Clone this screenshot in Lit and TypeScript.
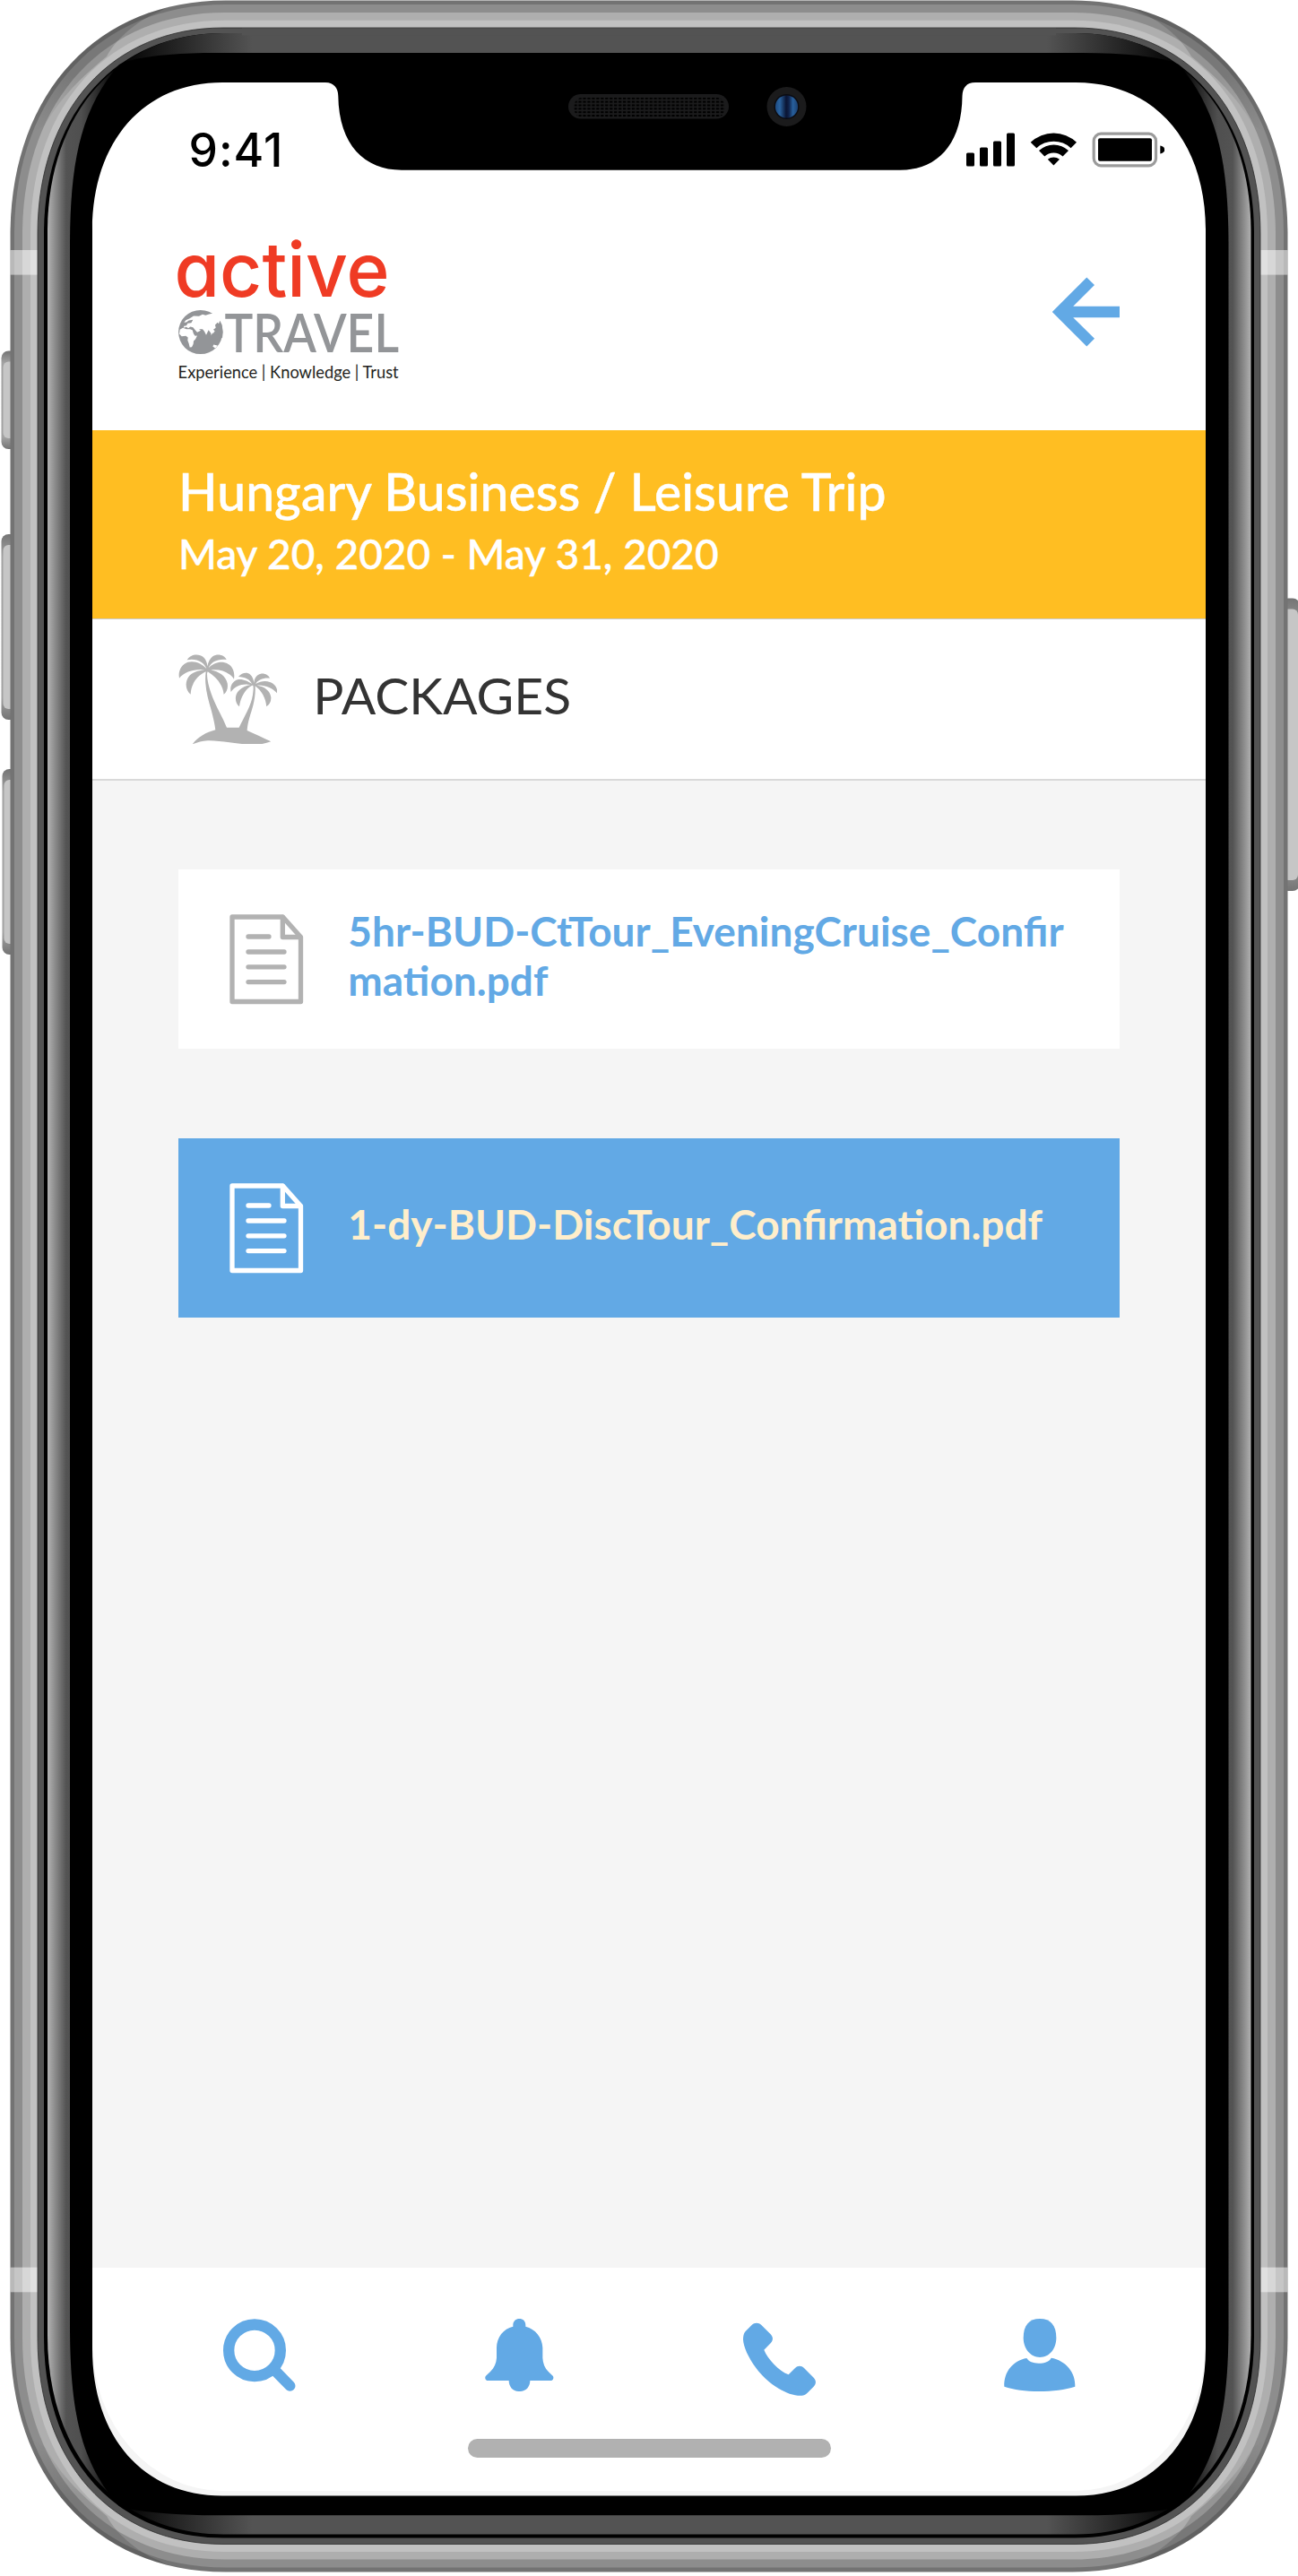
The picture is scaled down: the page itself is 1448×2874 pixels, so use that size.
import { LitElement, html, css, svg } from "lit";
import { customElement, property } from "lit/decorators.js";
import { classMap } from "lit/directives/class-map.js";

const CORNER = 0.6;

/** Closed rounded rectangle whose corners are slightly squarer than an ellipse. */
function body(l: number, t: number, r: number, b: number, rx: number, ry: number, k = CORNER): string {
  const cx = rx * (1 - k);
  const cy = ry * (1 - k);
  return [
    `M${l},${t + ry}`,
    `C${l},${t + cy} ${l + cx},${t} ${l + rx},${t}`,
    `L${r - rx},${t}`,
    `C${r - cx},${t} ${r},${t + cy} ${r},${t + ry}`,
    `L${r},${b - ry}`,
    `C${r},${b - cy} ${r - cx},${b} ${r - rx},${b}`,
    `L${l + rx},${b}`,
    `C${l + cx},${b} ${l},${b - cy} ${l},${b - ry}`,
    "Z",
  ].join(" ");
}

const SCREEN = [
  "M103,257 C103,158 160,92 248,92",
  "L363,92 C373,92 377.3,99 377.3,107 C378,162 407,189.7 448,189.7",
  "L1004,189.7 C1045,189.7 1073,162 1073.5,107 C1074,98 1078,92 1088,92",
  "L1200,92 C1288,92 1345,158 1345,257",
  "L1345,2620 C1345,2719 1288,2784.5 1200,2784.5",
  "L248,2784.5 C160,2784.5 103,2719 103,2620 Z",
].join(" ");

@customElement("phone-shell")
export class PhoneShell extends LitElement {
  static styles = css`
    :host { display: block; }
    .shell { display: block; width: 1448px; height: 2874px; }
  `;

  private sideKey(x: number, y: number, w: number, h: number) {
    return svg`
      <rect x=${x} y=${y} width=${w} height=${h} rx="8" fill="url(#key)"></rect>
      <rect x=${x + 2} y=${y + 12} width=${w - 4} height=${h - 24} rx="6" fill="#c6c6c6"></rect>`;
  }

  render() {
    const outer = body(11.5, 0.5, 1436.5, 2869.5, 240, 262);
    const rim = body(42, 31, 1406, 2838.5, 207, 230);
    const shade = "M200,0 L178,13 C150,24 128,46 119,63 C84,92 66,112 50,140 L33,150 L0,190 L0,0 Z";
    return html`
      <svg class="shell" viewBox="0 0 1448 2874" aria-hidden="true">
        <defs>
          <linearGradient id="glint" gradientUnits="userSpaceOnUse" x1="53" y1="0" x2="1396" y2="0">
            <stop offset="0" stop-color="#b2b2b2"></stop>
            <stop offset="0.0155" stop-color="#535353"></stop>
            <stop offset="0.028" stop-color="#4f4f4f"></stop>
            <stop offset="0.058" stop-color="#000"></stop>
            <stop offset="0.072" stop-color="#0a0a0a"></stop>
            <stop offset="0.17" stop-color="#535353"></stop>
            <stop offset="0.83" stop-color="#535353"></stop>
            <stop offset="0.928" stop-color="#0a0a0a"></stop>
            <stop offset="0.942" stop-color="#000"></stop>
            <stop offset="0.972" stop-color="#4f4f4f"></stop>
            <stop offset="0.9845" stop-color="#535353"></stop>
            <stop offset="1" stop-color="#b2b2b2"></stop>
          </linearGradient>
          <linearGradient id="key" x1="0" y1="0" x2="0" y2="1">
            <stop offset="0" stop-color="#747474"></stop>
            <stop offset="0.12" stop-color="#a2a2a2"></stop>
            <stop offset="0.88" stop-color="#a2a2a2"></stop>
            <stop offset="1" stop-color="#747474"></stop>
          </linearGradient>
          <linearGradient id="shade" gradientUnits="userSpaceOnUse" x1="40" y1="150" x2="70" y2="80">
            <stop offset="0" stop-opacity="0"></stop>
            <stop offset="1" stop-opacity="0.15"></stop>
          </linearGradient>
          <linearGradient id="lens">
            <stop offset="0" stop-color="#1d4a80"></stop>
            <stop offset="0.2" stop-color="#2a639f"></stop>
            <stop offset="0.48" stop-color="#0a1433"></stop>
            <stop offset="0.6" stop-color="#0f2149"></stop>
            <stop offset="0.78" stop-color="#28609c"></stop>
            <stop offset="1" stop-color="#1b4071"></stop>
          </linearGradient>
          <pattern id="mesh" patternUnits="userSpaceOnUse" x="640.5" y="108.8" width="4.95" height="3.85">
            <rect width="3.3" height="2" fill="#000"></rect>
          </pattern>
          <clipPath id="outer"><path d=${outer}></path></clipPath>
          <mask id="hole">
            <rect width="1448" height="2874" fill="#fff"></rect>
            <path d=${SCREEN} fill="#000"></path>
          </mask>
        </defs>

        <path d="M0,0H1448V2874H0Z ${outer}" fill="#fff" fill-rule="evenodd"></path>
        ${this.sideKey(1.5, 391.5, 20, 109.5)}
        ${this.sideKey(1.5, 596, 20, 207)}
        ${this.sideKey(2.5, 858, 20, 207)}
        ${this.sideKey(1429, 667.5, 21, 326.5)}

        <g mask="url(#hole)">
          <path d=${outer} fill="#737373"></path>
          <path d=${body(16, 5, 1432, 2864.5, 235, 257)} fill="#8d8d8d"></path>
          <path d=${body(25, 14, 1423, 2855.5, 226, 248)} fill="#aeaeae"></path>
          <path d=${body(34, 22.7, 1414, 2847, 216, 239)} fill="#c1c1c1"></path>
          <g clip-path="url(#outer)">
            ${["", "translate(1448 0) scale(-1 1)", "translate(0 2870) scale(1 -1)", "translate(1448 2870) scale(-1 -1)"].map(
              (t) => svg`<path transform=${t} d=${shade} fill="url(#shade)"></path>`
            )}
            <g fill="#fff" fill-opacity="0.5">
              <rect x="11" y="279" width="31.5" height="27.6"></rect>
              <rect x="1405.5" y="279" width="31.5" height="27.6"></rect>
              <rect x="11" y="2529.7" width="31.5" height="27.6"></rect>
              <rect x="1405.5" y="2529.7" width="31.5" height="27.6"></rect>
            </g>
          </g>
          <path d=${rim} fill="#535353" stroke="#2c2c2c" stroke-width="0.8"></path>
          <path d=${body(49, 37, 1399, 2831.5, 200, 224)} fill="#000"></path>
          <path d=${body(53, 37, 1395.5, 2827.5, 196, 222)} fill="url(#glint)"></path>
          <rect x="270" y="31.5" width="908" height="8" fill="#535353"></rect>
          <path
            d="M78,275 C78,180 90,122 133,72 L143,68 C170,61 205,59 240,59 L1208,59 C1243,59 1278,61 1305,68 L1315,72 C1358,122 1370.5,180 1370.5,275
               L1370.5,2594 C1370.5,2690 1358,2748 1315,2796 L1305,2799 C1278,2804 1243,2806.3 1208,2806.3 L240,2806.3 C205,2806.3 170,2804 143,2799 L133,2796 C90,2748 78,2690 78,2594 Z"
            fill="#000"
          ></path>
          <rect x="634" y="105" width="179" height="27.6" rx="13.8" fill="#1b1b1c"></rect>
          <rect x="640.5" y="108.8" width="168" height="22" rx="9" fill="url(#mesh)"></rect>
          <circle cx="877.5" cy="119" r="22" fill="#1b1b1c"></circle>
          <circle cx="877.5" cy="119" r="14" fill="#0b0c12"></circle>
          <circle cx="877.5" cy="119" r="12.6" fill="url(#lens)"></circle>
        </g>
      </svg>
    `;
  }
}

@customElement("status-bar")
export class StatusBar extends LitElement {
  static styles = css`
    :host { display: flex; justify-content: space-between; align-items: center; height: 128px; padding: 21px 46px 0 107.5px; box-sizing: border-box; }
    .time { font: 500 51.5px/60px Inter, sans-serif; letter-spacing: 1px; color: #000; }
    .signals { display: block; width: 222px; height: 44px; }
  `;

  render() {
    return html`
      <span class="time">9:41</span>
      <svg class="signals" viewBox="1077 144.5 222 44" role="img" aria-label="Signal, Wi-Fi, battery">
        <rect x="1078" y="170" width="9" height="15" rx="1.5"></rect>
        <rect x="1093" y="164" width="9" height="21" rx="1.5"></rect>
        <rect x="1108" y="157" width="9" height="28" rx="1.5"></rect>
        <rect x="1123" y="148" width="9" height="37" rx="1.5"></rect>
        <path d="M1149.7,158.3 A37,37 0 0 1 1201,158.3 L1194.6,164.7 A28,28 0 0 0 1156.3,164.7 Z"></path>
        <path d="M1159,167.5 A24,24 0 0 1 1192,167.5 L1185.5,174 A14.6,14.6 0 0 0 1165.3,174 Z"></path>
        <path d="M1168.8,177.3 A10.5,10.5 0 0 1 1182,177.3 L1175.4,184 Z"></path>
        <rect x="1220.2" y="148.7" width="69.3" height="35.6" rx="8" fill="none" stroke="#9b9b9b" stroke-width="3.2"></rect>
        <rect x="1225" y="153.7" width="60" height="25.6" rx="2"></rect>
        <path d="M1294.3,162 Q1299.2,163 1299.2,166.4 Q1299.2,170 1294.3,171 Z"></path>
      </svg>
    `;
  }
}

@customElement("brand-header")
export class BrandHeader extends LitElement {
  static styles = css`
    :host { display: flex; justify-content: space-between; align-items: center; height: 260px; padding: 0 96px 5px 95px; box-sizing: border-box; }
    .logo { display: block; width: 254px; height: 170px; overflow: visible; }
    .active { font: 500 84px Inter, sans-serif; font-feature-settings: "cv11"; fill: #ef3b24; }
    .travel { font: 600 60px Lato, sans-serif; fill: #939598; }
    .tagline { font: 400 18.5px Lato, sans-serif; fill: #231f20; }
    .back { display: block; width: 75px; height: 78px; fill: #62a9e5; }
  `;

  render() {
    return html`
      <svg class="logo" viewBox="198 262.5 254 170" role="img" aria-label="active TRAVEL">
        <text class="active" x="194.5" y="330" textLength="240" lengthAdjust="spacingAndGlyphs">active</text>
        <circle cx="223.7" cy="370" r="24.6" fill="#939598"></circle>
        <path
          transform="translate(180 250) scale(0.33333)"
          fill="#fff"
          d="M174,297 L160,300 L148,304 L138,301 L126,307 L108,306 L95,314 L82,320 L76,328 L84,327 L92,321 L106,319 L100,329 L88,331 L84,338 L76,340 L74,346 L84,343
             L90,347 L97,342 L106,344 L112,352 L120,361 L132,355 L126,350 L138,350 L144,358 L150,370 L158,353 L166,364 L168,376 L173,368 L176,360 L184,352 L188,340 L196,336
             L206,330 L200,312 L186,300 Z
             M62,352 L72,346 L84,350 L96,350 L104,353 L108,366 L113,373 L120,372 L114,384 L108,390 L107,400 L102,410 L95,411 L92,398 L88,388 L89,378 L82,373 L68,374 L60,366 Z
             M175,402 L188,405 L184,411 L180,414 L172,408 Z"
        ></path>
        <g transform="translate(180 250) scale(0.33333)" fill="#939598">
          <path d="M180,336 L188,328 L192,332 L196,322 L203,336 L206,360 L204,380 L196,376 L198,364 L192,366 L188,354 L180,358 L174,352 L182,346 Z"></path>
          <path d="M162,366 L166,372 L172,362 L178,370 L188,368 L196,378 L188,384 L176,380 L164,386 L158,372 Z"></path>
        </g>
        <text class="travel" x="250.5" y="392" textLength="194.5" lengthAdjust="spacingAndGlyphs">TRAVEL</text>
        <text class="tagline" x="198.6" y="421" textLength="246" lengthAdjust="spacingAndGlyphs">Experience | Knowledge | Trust</text>
      </svg>
      <svg class="back" viewBox="1174 308.5 75 78" role="img" aria-label="Back">
        <path d="M1173.7,347.5 L1212.3,309 L1221,317.6 L1197.2,341.2 L1249,341.2 L1249,353.8 L1197.2,353.8 L1221,377.3 L1212.3,386 Z"></path>
      </svg>
    `;
  }
}

@customElement("document-card")
export class DocumentCard extends LitElement {
  @property() name = "";
  @property({ type: Boolean }) active = false;

  static styles = css`
    :host { display: block; }
    .card { display: flex; align-items: center; height: 200px; box-sizing: border-box; padding: 0 46px 0 57px; gap: 49.8px; background: #fff; color: #62a9e5; }
    .icon { flex: none; width: 83px; height: 101px; fill: none; stroke: #b2b2b2; stroke-width: 5.3; stroke-linecap: round; stroke-linejoin: round; }
    .name { flex: 1; padding-bottom: 9px; font: 700 46px/55px Lato, sans-serif; word-break: break-all; }
    .card.active { background: #62a9e5; color: #ffeecb; }
    .card.active .icon { stroke: #fff; }
  `;

  render() {
    return html`
      <div class=${classMap({ card: true, active: this.active })}>
        <svg class="icon" viewBox="0 0 83 101" aria-hidden="true">
          <path d="M3,3 H59.5 L79.5,25.5 V97.5 H3 Z"></path>
          <path d="M59.3,3.5 V25.5 H79"></path>
          <path d="M21,25 H44 M21,42 H61 M21,58.8 H61 M21,75.6 H61"></path>
        </svg>
        <span class="name">${this.name}</span>
      </div>
    `;
  }
}

@customElement("bottom-nav")
export class BottomNav extends LitElement {
  static styles = css`
    :host { display: flex; flex-direction: column; align-items: center; height: 248.5px; background: #fff; border-radius: 0 0 145px 145px / 0 0 165px 165px; }
    .tabs { display: grid; grid-template-columns: repeat(4, 290.3px); justify-items: center; width: 1161px; height: 190.5px; margin-left: 1px; }
    .tab { display: block; height: 82px; margin-top: 57px; fill: #62a9e5; overflow: visible; }
    .indicator { width: 405px; height: 21.5px; border-radius: 11px; background: #b1b1b1; }
  `;

  render() {
    return html`
      <nav class="tabs">
        <svg class="tab" width="81" viewBox="146 141 243 246" role="img" aria-label="Search">
          <circle cx="251" cy="247" r="86.5" fill="none" stroke="#62a9e5" stroke-width="37"></circle>
          <path d="M323,318 L369.5,365.5" stroke="#62a9e5" stroke-width="36" stroke-linecap="round"></path>
        </svg>
        <svg class="tab" width="77" viewBox="1022 141 231 246" role="img" aria-label="Notifications">
          <path
            d="M1116,167 V162 C1116,149 1126,141 1137,141 C1149,141 1158,149 1158,162 V167 C1190,175 1214,203 1215,238 V272 C1216,290 1222,306 1235,319 L1249,332
               C1254,338 1250,348 1242,348 H1173 C1173,369 1159,384 1140,384 H1134 C1116,384 1102,369 1102,348 H1032 C1024,348 1020,338 1025,332 L1040,318
               C1053,305 1060,290 1061,272 V238 C1061,203 1084,174 1116,167 Z"
          ></path>
        </svg>
        <svg class="tab" width="81" viewBox="327 141 243 246" role="img" aria-label="Call">
          <path
            d="M356,162 C365,153 379,153 388,162 L419,193 C428,202 428,214 419,223 L397,245 C409,275 446,315 479,328 L501,306 C510,297 522,297 531,306
               L563,338 C572,347 572,359 563,368 L542,389 C534,397 525,399 510,398 C464,394 406,354 371,307 C344,271 328,234 327,211 C327,199 329,189 335,183 Z"
          ></path>
        </svg>
        <svg class="tab" width="80" viewBox="1199 141 240 246" role="img" aria-label="Profile">
          <path d="M1319,141 C1355,141 1374,163 1374,205 C1374,242 1351,270 1319,270 C1288,270 1264,242 1264,205 C1264,163 1283,141 1319,141 Z"></path>
          <path
            d="M1275,273 C1282,284 1296,290 1315,290 C1335,290 1351,284 1357,272 C1405,280 1439,320 1437,368 C1404,378 1362,384 1316,384
               C1271,384 1232,378 1200,368 C1198,319 1229,281 1275,273 Z"
          ></path>
        </svg>
      </nav>
      <div class="indicator"></div>
    `;
  }
}

@customElement("app-root")
export class AppRoot extends LitElement {
  private readonly documents = [
    { name: "5hr-BUD-CtTour_EveningCruise_Confirmation.pdf", active: false },
    { name: "1-dy-BUD-DiscTour_Confirmation.pdf", active: true },
  ];

  static styles = css`
    :host { display: block; position: relative; width: 1448px; height: 2874px; overflow: hidden; background: #fff; font-family: Lato, sans-serif; }
    .screen { display: flex; flex-direction: column; width: 1242px; height: 2693px; margin: 92px 0 0 103px; background: #f5f5f5; }
    .top { background: #fff; }
    .trip { box-sizing: border-box; height: 211px; padding: 36px 90px 0 96px; background: #ffbe22; border-bottom: 1.5px solid #ccc; color: #fff; white-space: nowrap; -webkit-text-stroke: 0.45px #fff; }
    .trip-name { margin: 0; font: 500 57px/65px Lato, sans-serif; letter-spacing: 0.08px; }
    .trip-dates { margin: 0; font: 500 46px/73px Lato, sans-serif; }
    .section { display: flex; align-items: center; box-sizing: border-box; height: 180px; padding-left: 95.5px; gap: 40.5px; background: #fff; border-bottom: 2px solid #d9d9d9; }
    .palms { display: block; width: 110.3px; height: 100.7px; fill: #b2b2b2; }
    .section-name { margin: 0; padding-bottom: 11px; font: 400 57px/66px Lato, sans-serif; color: #333; }
    .list { flex: 1; display: flex; flex-direction: column; gap: 100px; padding: 99px 96px 0 95.5px; }
    .nav { flex: none; margin-bottom: 6.5px; }
    .shell { position: absolute; inset: 0; pointer-events: none; }
  `;

  render() {
    return html`
      <main class="screen">
        <div class="top">
          <status-bar></status-bar>
          <brand-header></brand-header>
        </div>
        <section class="trip">
          <h1 class="trip-name">Hungary Business / Leisure Trip</h1>
          <p class="trip-dates">May 20, 2020 - May 31, 2020</p>
        </section>
        <section class="section">
          <svg class="palms" viewBox="26 28 331 302" aria-hidden="true">
            <path
              d="M120,76 C113,56 88,40 55,47 C66,28 94,24 110,38 C118,45 122,56 123,68 C126,54 131,43 141,35 C157,24 181,30 187,46 C158,42 134,54 127,74
                 C140,60 160,52 178,55 C204,60 217,84 212,111 C200,90 166,76 135,81 C160,84 185,100 190,125 C193,142 188,154 178,162 C176,134 156,106 124,86
                 L122,92 C122,130 140,176 164,222 C174,242 181,256 188,273 L229,273 C246,238 270,200 275,164 C277,150 278,140 276,132 L273,132 C252,142 234,170 230,203
                 C214,188 213,164 230,148 C240,138 254,132 268,130 C242,124 214,134 202,154 C197,134 208,116 227,112 C242,110 260,118 272,127 C266,112 248,104 227,103
                 C238,90 256,86 267,96 C274,102 278,112 279,124 C280,108 288,96 302,93 C316,91 328,98 332,108 C310,106 292,114 285,127 C300,118 318,116 332,121
                 C352,128 359,144 356,158 C342,142 316,130 290,132 C314,136 334,150 336,172 C337,186 331,196 321,203 C319,176 305,150 283,134
                 C286,176 272,214 264,240 C259,256 257,270 256,283 C282,294 310,308 336,320 C310,330 284,332 250,329 C200,325 160,316 124,317 C104,318 88,324 73,329
                 C92,304 118,290 150,281 C148,262 142,238 136,215 C124,172 112,132 118,86 C88,100 68,128 67,162 C50,148 47,124 60,104 C70,90 92,82 114,80
                 C80,76 44,88 29,108 C24,84 36,62 58,54 C82,48 106,60 120,76 Z"
            ></path>
          </svg>
          <h2 class="section-name">PACKAGES</h2>
        </section>
        <div class="list">
          ${this.documents.map((d) => html`<document-card .name=${d.name} .active=${d.active}></document-card>`)}
        </div>
        <bottom-nav class="nav"></bottom-nav>
      </main>
      <phone-shell class="shell"></phone-shell>
    `;
  }
}
